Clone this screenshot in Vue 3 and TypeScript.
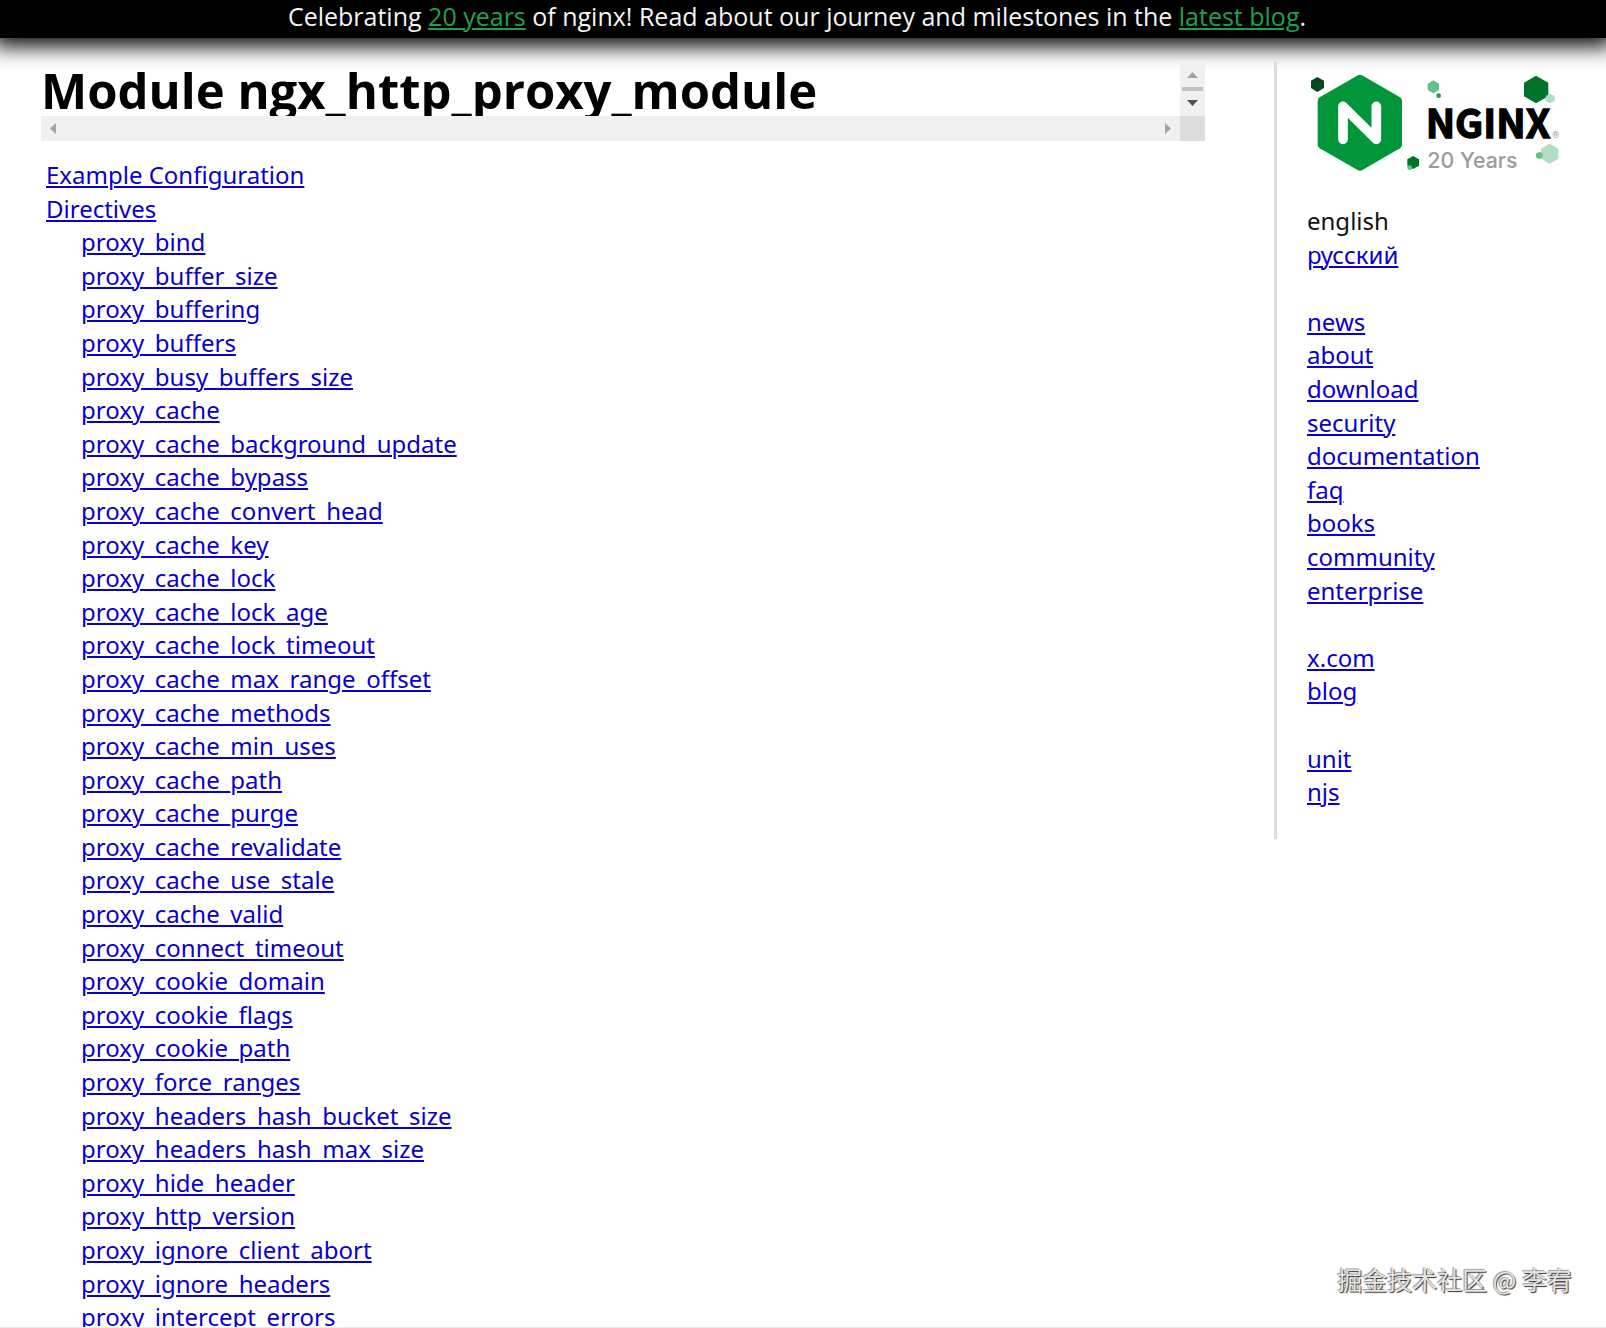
<script setup lang="ts">
const directives: string[] = [
  'proxy_bind',
  'proxy_buffer_size',
  'proxy_buffering',
  'proxy_buffers',
  'proxy_busy_buffers_size',
  'proxy_cache',
  'proxy_cache_background_update',
  'proxy_cache_bypass',
  'proxy_cache_convert_head',
  'proxy_cache_key',
  'proxy_cache_lock',
  'proxy_cache_lock_age',
  'proxy_cache_lock_timeout',
  'proxy_cache_max_range_offset',
  'proxy_cache_methods',
  'proxy_cache_min_uses',
  'proxy_cache_path',
  'proxy_cache_purge',
  'proxy_cache_revalidate',
  'proxy_cache_use_stale',
  'proxy_cache_valid',
  'proxy_connect_timeout',
  'proxy_cookie_domain',
  'proxy_cookie_flags',
  'proxy_cookie_path',
  'proxy_force_ranges',
  'proxy_headers_hash_bucket_size',
  'proxy_headers_hash_max_size',
  'proxy_hide_header',
  'proxy_http_version',
  'proxy_ignore_client_abort',
  'proxy_ignore_headers',
  'proxy_intercept_errors',
]

const menuGroups: string[][] = [
  ['news', 'about', 'download', 'security', 'documentation', 'faq', 'books', 'community', 'enterprise'],
  ['x.com', 'blog'],
  ['unit', 'njs'],
]
</script>

<template>
  <div class="page">
    <header class="banner">
      Celebrating <a href="#20-years">20 years</a> of nginx! Read about our journey and milestones in the
      <a href="#latest-blog">latest blog</a>.
    </header>

    <div class="main">
      <main class="content">
        <div class="title-box">
          <h1>Module ngx_http_proxy_module</h1>
          <div class="vbar">
            <svg width="11" height="6" viewBox="0 0 11 6"><path d="M0 6L5.500 0L11 6z" fill="#a3a3a3" /></svg>
            <span class="thumb"></span>
            <svg width="11" height="6" viewBox="0 0 11 6"><path d="M0 0H11L5.500 6z" fill="#505050" /></svg>
          </div>
          <div class="hbar">
            <svg width="6" height="11" viewBox="0 0 6 11"><path d="M6 0V11L0 5.500z" fill="#a3a3a3" /></svg>
            <svg width="6" height="11" viewBox="0 0 6 11"><path d="M0 0V11L6 5.500z" fill="#a3a3a3" /></svg>
          </div>
          <div class="corner"></div>
        </div>

        <ul class="toc">
          <li><a href="#example">Example Configuration</a></li>
          <li>
            <a href="#directives">Directives</a>
            <ul>
              <li v-for="name in directives" :key="name">
                <a :href="'#' + name">{{ name }}</a>
              </li>
            </ul>
          </li>
        </ul>
      </main>

      <aside class="sidebar">
        <a class="logo" href="#home" aria-label="nginx home">
          <svg width="256" height="112" viewBox="111 57 768 336">
            <polygon points="142,81 162,92 162,114 142,126 123,114 123,92" fill="#00491f" />
            <path
              d="M264 76Q270 73 276 76L390 142Q396 146 396 152V285Q396 291 390 295L276 361Q270 364 264 361L149 295Q143 291 143 285V152Q143 146 149 142z"
              fill="#009639"
            />
            <path d="M219 268V169L319 268V169" fill="none" stroke="#fff" stroke-width="29" stroke-linecap="round" stroke-linejoin="round" />
            <polygon points="490,91 507,101 507,120 490,130 473,120 473,101" fill="#66c088" />
            <circle cx="506" cy="137" r="7" fill="#1f9a50" />
            <polygon points="798,77 835,98 835,139 798,160 762,139 762,98" fill="#00732b" />
            <polygon points="840,131 854,138 854,153 840,160 827,153 827,138" fill="#a5dabb" fill-opacity="0.9" />
            <polygon points="429,318 447,328 447,347 429,357 412,347 412,328" fill="#00732b" />
            <circle cx="419" cy="353" r="7" fill="#66c088" />
            <polygon points="839,281 865,296 865,326 839,341 813,326 813,296" fill="#b0dec3" />
            <polygon points="808,305 818,311 818,322 808,328 798,322 798,311" fill="#66c088" />
            <text class="wordmark" x="467" y="265">NGINX</text>
            <text class="years" x="472" y="354">20 Years</text>
            <text class="reg" x="847" y="265">®</text>
          </svg>
        </a>
        <ul class="menu">
          <li>english</li>
          <li><a href="#ru">русский</a></li>
        </ul>
        <ul v-for="(group, i) in menuGroups" :key="i" class="menu">
          <li v-for="item in group" :key="item">
            <a :href="'#' + item">{{ item }}</a>
          </li>
        </ul>
      </aside>
    </div>

    <div class="watermark">掘金技术社区 @ 李宥</div>
  </div>
</template>

<style>
body {
  margin: 0;
  background: #fff;
}
</style>

<style scoped>
.page {
  position: relative;
  box-sizing: border-box;
  height: 100vh;
  overflow: hidden;
  border-bottom: 1px solid #ececec;
  font-family: 'Noto Sans', 'Open Sans', sans-serif;
  font-size: 24px;
  line-height: 1.4;
  color: #111;
}
a {
  color: #0a00cc;
  text-decoration-thickness: 2px;
  text-underline-offset: 2px;
}
ul {
  margin: 0;
  padding: 0;
  list-style: none;
}
.banner {
  height: 38px;
  padding-right: 12px;
  font-family: 'Open Sans', sans-serif;
  font-size: 25px;
  line-height: 32px;
  text-align: center;
  color: #f4f4f4;
  background: #000;
  box-shadow: 0 0 22px 8px #000;
}
.banner a {
  color: #1fa14c;
}
.main {
  display: flex;
  align-items: flex-start;
  padding-top: 24px;
}
.content {
  flex: 1;
  margin: 0 69px 0 41px;
}
.title-box {
  display: grid;
  grid-template-columns: 1fr 25px;
  grid-template-rows: 54px 25px;
}
h1 {
  margin: 0;
  overflow: hidden;
  white-space: nowrap;
  font-family: 'Open Sans', sans-serif;
  font-size: 49px;
  line-height: 56px;
  color: #000;
}
.vbar {
  display: flex;
  flex-direction: column;
  align-items: center;
  justify-content: space-between;
  box-sizing: border-box;
  padding: 10px 0;
  background: #f0f0f0;
}
.thumb {
  width: 21px;
  height: 4px;
  background: #c1c1c1;
}
.hbar {
  display: flex;
  align-items: center;
  justify-content: space-between;
  padding: 0 9px;
  background: #f0f0f0;
}
.corner {
  background: #dcdcdc;
}
.toc {
  margin: 17px 0 0 5px;
}
.toc ul {
  padding-left: 35px;
}
.sidebar {
  box-sizing: border-box;
  width: 332px;
  padding: 7px 0 30px 30px;
  border-left: 3px solid #dcdcdc;
}
.logo {
  display: block;
  height: 135px;
}
.logo svg {
  display: block;
}
.menu + .menu {
  margin-top: 1.4em;
}
.wordmark {
  font: bold 118px 'Noto Sans CJK SC', sans-serif;
  fill: #000;
  stroke: #000;
  stroke-width: 4px;
}
.years {
  font: 500 64px Inter, sans-serif;
  fill: #9b9b9b;
}
.reg {
  font: 26px Roboto, sans-serif;
  fill: #9b9b9b;
}
.watermark {
  position: absolute;
  right: 34px;
  bottom: 30px;
  font-family: 'Noto Sans CJK SC', sans-serif;
  font-size: 25px;
  line-height: 36px;
  color: #e4e4e4;
  text-shadow: 1px 1px 1px #333, -1px -1px 1px #999;
}
</style>
